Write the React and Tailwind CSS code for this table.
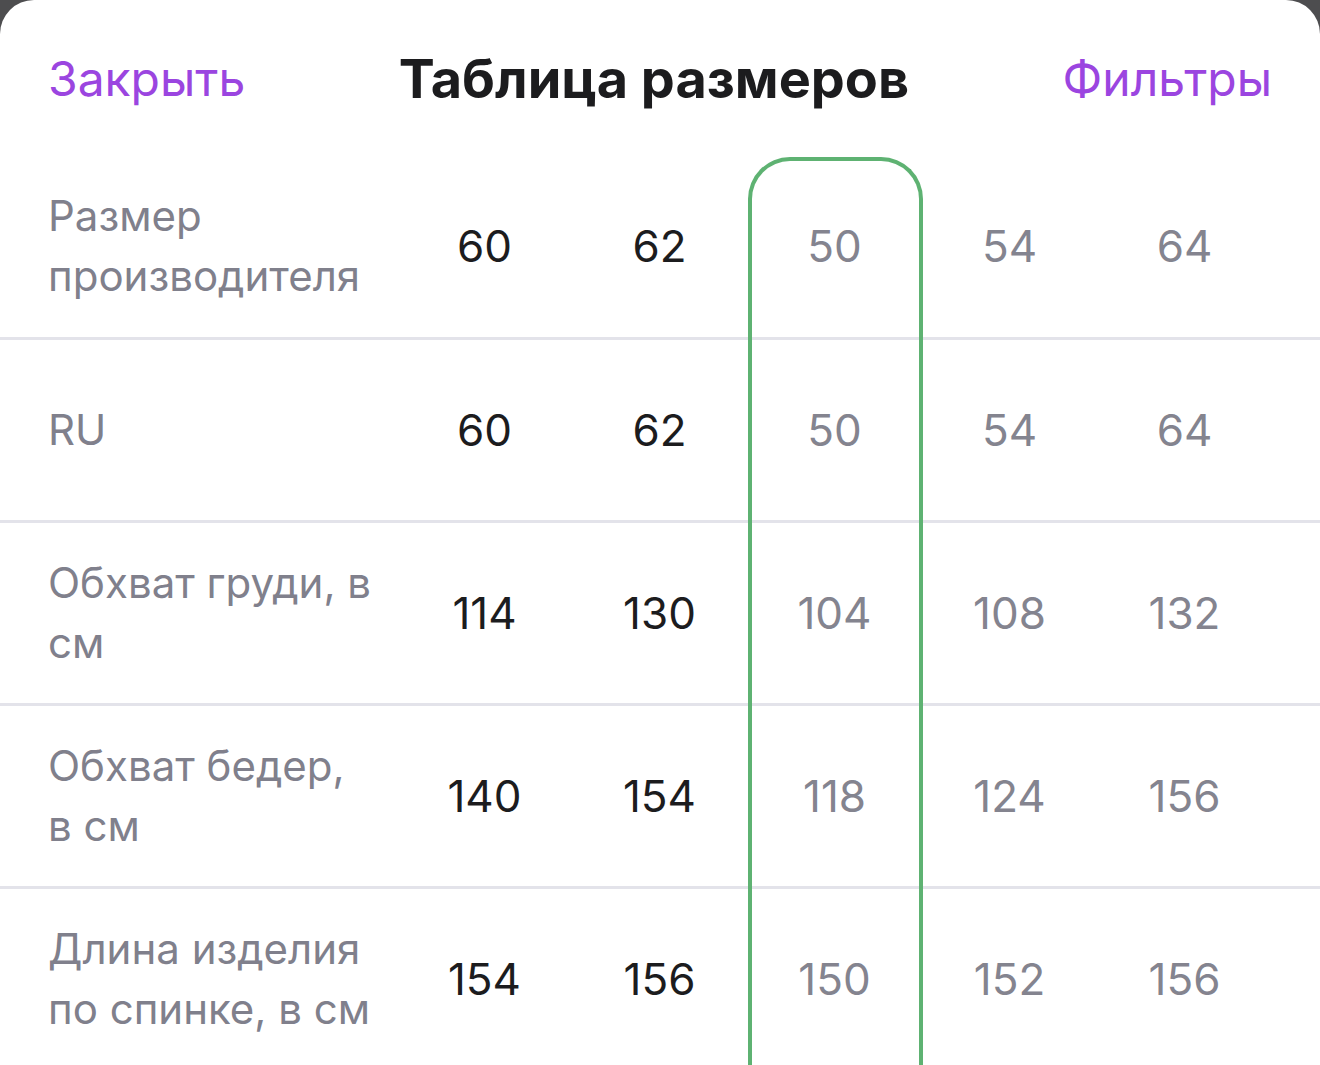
import React from 'react';

const rows = [
  { label: ['Размер', 'производителя'], values: ['60', '62', '50', '54', '64'] },
  { label: ['RU'], values: ['60', '62', '50', '54', '64'] },
  { label: ['Обхват груди, в', 'см'], values: ['114', '130', '104', '108', '132'] },
  { label: ['Обхват бедер,', 'в см'], values: ['140', '154', '118', '124', '156'] },
  { label: ['Длина изделия', 'по спинке, в см'], values: ['154', '156', '150', '152', '156'] },
];

const App = () => {
  return (
    <div className="h-[1065px] w-[1320px] overflow-hidden bg-[#4d4d4f]" style={{ fontFamily: 'Inter, "Noto Sans", sans-serif' }}>
      <div className="h-full w-full rounded-t-[34px] bg-white">
        {/* header */}
        <div className="flex h-[155px] items-center justify-between px-[48px] pt-[2px]">
          <button className="text-[48px] text-[#9b45e0]">Закрыть</button>
          <h1 className="text-[54px] font-bold text-[#1c1c1e]">Таблица размеров</h1>
          <button className="text-[48px] text-[#9b45e0]">Фильтры</button>
        </div>

        {/* table */}
        <div className="relative">
          {rows.map((row, i) => (
            <div key={i} className={`flex items-center ${i > 0 ? 'h-[183px] border-t-[3px] border-[#e3e3ea]' : 'h-[182px]'}`}>
              <div className="w-[397px] shrink-0 pl-[48px] text-[42px] leading-[60px] text-[#80808c]">
                {row.label.map((line, j) => (
                  <div key={j}>{line}</div>
                ))}
              </div>
              {row.values.map((v, j) => (
                <div
                  key={j}
                  className={`w-[175px] shrink-0 text-center text-[44px] ${j < 2 ? 'text-[#1c1c1e]' : 'text-[#84848f]'}`}
                >
                  {v}
                </div>
              ))}
            </div>
          ))}
          {/* selected column highlight */}
          <div className="pointer-events-none absolute left-[748px] top-[2px] h-[940px] w-[175px] rounded-t-[42px] border-4 border-b-0 border-[#5eb272]" />
        </div>
      </div>
    </div>
  );
};

export default App;
